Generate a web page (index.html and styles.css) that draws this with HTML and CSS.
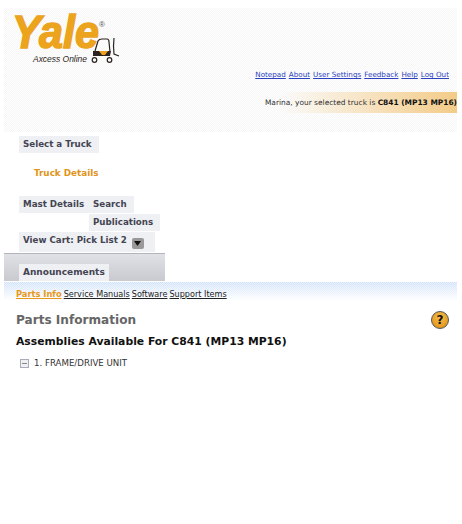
FILE: index.html
```html
<!DOCTYPE html>
<html>
  <head>
    <link rel="stylesheet" href="styles.css">
  </head>
  <body>
    <div class="header">
      <div class="logo">
        <svg width="118" height="58" viewBox="0 0 118 58">
          <text class="logo-name" x="4" y="40" textLength="87" lengthAdjust="spacingAndGlyphs">Yale</text>
          <text class="logo-reg" x="91" y="19">®</text>
          <text class="logo-sub" x="25" y="54" textLength="54" lengthAdjust="spacingAndGlyphs">Axcess Online</text>
          <g fill="none" stroke="#2a2320" stroke-width="1.2">
            <path d="M87 43 L90 33 Q91 31 94 31 L99 31 Q101 31 101 34 L102 44"/>
            <path d="M106 30 Q105 38 106 46 L111 48"/>
            <circle cx="86.500" cy="52" r="2.300"/>
            <circle cx="101.500" cy="52" r="2.300"/>
          </g>
          <path d="M85 43 H103 L102 48 H85 Z" fill="#2a2320"/>
          <path d="M91 43 H100 L97 47 H94 Z" fill="#eaa21f"/>
        </svg>
      </div>
      <div class="top-links">
        <a href="#">Notepad</a>
        <a href="#">About</a>
        <a href="#">User Settings</a>
        <a href="#">Feedback</a>
        <a href="#">Help</a>
        <a href="#">Log Out</a>
      </div>
      <div class="truck-bar">Marina, your selected truck is <b>C841 (MP13 MP16)</b></div>
    </div>

    <div class="nav">
      <div class="nav-row"><a class="tab tab-select" href="#">Select a Truck</a></div>
      <div class="nav-row"><a class="tab-active" href="#">Truck Details</a></div>
      <div class="nav-row nav-double">
        <a class="tab tab-mast" href="#">Mast Details</a>
        <div class="nav-stack">
          <a class="tab tab-search" href="#">Search</a>
          <a class="tab tab-pubs" href="#">Publications</a>
        </div>
      </div>
      <div class="nav-row">
        <a class="tab tab-cart" href="#">View Cart: Pick List 2
          <span class="cart-arrow"><svg width="7" height="5" viewBox="0 0 7 5"><path d="M0 0H7L3.500 5Z" fill="#111"/></svg></span>
        </a>
      </div>
      <div class="announce">
        <a class="tab tab-announce" href="#">Announcements</a>
      </div>
    </div>

    <div class="sub-nav">
      <a class="current" href="#">Parts Info</a>
      <a href="#">Service Manuals</a>
      <a href="#">Software</a>
      <a href="#">Support Items</a>
    </div>

    <div class="content">
      <div class="title-row">
        <h1>Parts Information</h1>
        <a class="help" href="#">?</a>
      </div>
      <h2>Assemblies Available For C841 (MP13 MP16)</h2>
      <div class="tree-item">
        <span class="tree-toggle"></span>
        <span>1. FRAME/DRIVE UNIT</span>
      </div>
    </div>
  </body>
</html>
```

FILE: styles.css
```css
body {
  margin: 8px 5px 0 4px;
  background: white;
  font-family: "DejaVu Sans", Verdana, sans-serif;
  color: #333;
}

a {
  text-decoration: none;
}

/* header */
.header {
  height: 124px;
  background-color: #fff;
  background-image: repeating-conic-gradient(#f6f6f6 0 25%, #fff 0 50%);
  background-size: 2px 2px;
}

.logo {
  height: 55px;
  padding-left: 4px;
}

.logo svg {
  display: block;
  overflow: visible;
}

.logo-name {
  font-family: "Liberation Sans", Arial, sans-serif;
  font-size: 47px;
  font-weight: bold;
  font-style: italic;
  fill: #eca31e;
  stroke: #eca31e;
  stroke-width: 1.6px;
}

.logo-reg {
  font-family: "Liberation Sans", Arial, sans-serif;
  font-size: 8px;
  fill: #555;
}

.logo-sub {
  font-family: "Liberation Sans", Arial, sans-serif;
  font-size: 9px;
  font-style: italic;
  fill: #2a2320;
}

.top-links {
  height: 23px;
  display: flex;
  justify-content: flex-end;
  gap: 3px;
  padding-right: 8px;
  align-items: center;
  font-size: 7.200px;
}

.top-links a {
  color: #2b3fc0;
  text-decoration: underline;
}

.truck-bar {
  height: 21px;
  margin-top: 6px;
  line-height: 21px;
  text-align: right;
  font-size: 7.450px;
  color: #333;
  white-space: nowrap;
  background: linear-gradient(to right, rgba(243, 203, 135, 0) 276px, #f3cb87 100%);
}

.truck-bar b {
  color: #111;
}

/* left nav */
.nav {
  width: 161px;
  padding-top: 4px;
}

.tab {
  display: block;
  background: #eef0f3;
  color: #444452;
  font-size: 8.700px;
  font-weight: bold;
  height: 17px;
  line-height: 16px;
  padding-left: 4px;
  box-sizing: border-box;
  white-space: nowrap;
}

.nav-row {
  padding-left: 15px;
}

.tab-select {
  width: 80px;
}

.tab-active {
  display: block;
  color: #e0941a;
  font-size: 8.800px;
  font-weight: bold;
  padding: 13px 0 15px 15px;
  line-height: 15px;
}

.nav-double {
  display: flex;
  align-items: flex-start;
}

.tab-mast {
  width: 70px;
}

.nav-stack {
  display: flex;
  flex-direction: column;
  gap: 1px;
}

.tab-search {
  width: 45px;
}

.tab-pubs {
  width: 71px;
}

.tab-cart {
  width: 136px;
  height: 20px;
  margin-top: 1px;
}

.cart-arrow {
  display: inline-flex;
  align-items: center;
  justify-content: center;
  width: 12px;
  height: 11px;
  margin-left: 2px;
  vertical-align: -3px;
  background: #999;
  border-radius: 2px;
}

.announce {
  margin-top: 1px;
  height: 28px;
  padding: 10px 0 0 15px;
  box-sizing: border-box;
  border-top: 1px solid #b4b4c0;
  background: linear-gradient(#e0e1e5, #c9cacf);
}

.tab-announce {
  width: 90px;
  font-size: 9px;
}

/* sub nav */
.sub-nav {
  margin-top: 1px;
  height: 19px;
  padding: 5px 0 0 12px;
  box-sizing: border-box;
  display: flex;
  gap: 2px;
  font-size: 8.100px;
  line-height: 14px;
  background:
    repeating-conic-gradient(rgba(255, 255, 255, 0.5) 0 25%, transparent 0 50%) 0 0 / 2px 2px,
    linear-gradient(#cfe1fa, #fff);
}

.sub-nav a {
  color: #222;
  text-decoration: underline;
}

.sub-nav a.current {
  color: #e8981c;
  font-weight: bold;
  font-size: 8.300px;
}

/* main */
.content {
  padding: 9px 0 0 12px;
}

.title-row {
  display: flex;
  justify-content: space-between;
  align-items: center;
  height: 20px;
  padding-right: 8px;
}

h1 {
  margin: 0;
  font-size: 12.100px;
  font-weight: bold;
  color: #666;
}

.help {
  width: 16px;
  height: 16px;
  line-height: 16px;
  text-align: center;
  border-radius: 50%;
  background: radial-gradient(circle at 50% 35%, #f8c04a, #d98a10);
  border: 1px solid #555;
  color: #111;
  font-size: 12px;
  font-weight: bold;
}

h2 {
  margin: 2px 0 0 0;
  font-size: 10.800px;
  line-height: 20px;
  font-weight: bold;
  color: #111;
}

.tree-item {
  display: flex;
  align-items: center;
  gap: 5px;
  margin-top: 4px;
  padding-left: 4px;
  font-size: 8.650px;
  line-height: 14px;
  color: #333;
}

.tree-toggle {
  width: 7px;
  height: 7px;
  border: 1px solid #aab;
  background: linear-gradient(#888, #888) center / 5px 1px no-repeat, #eef0f4;
}
```
